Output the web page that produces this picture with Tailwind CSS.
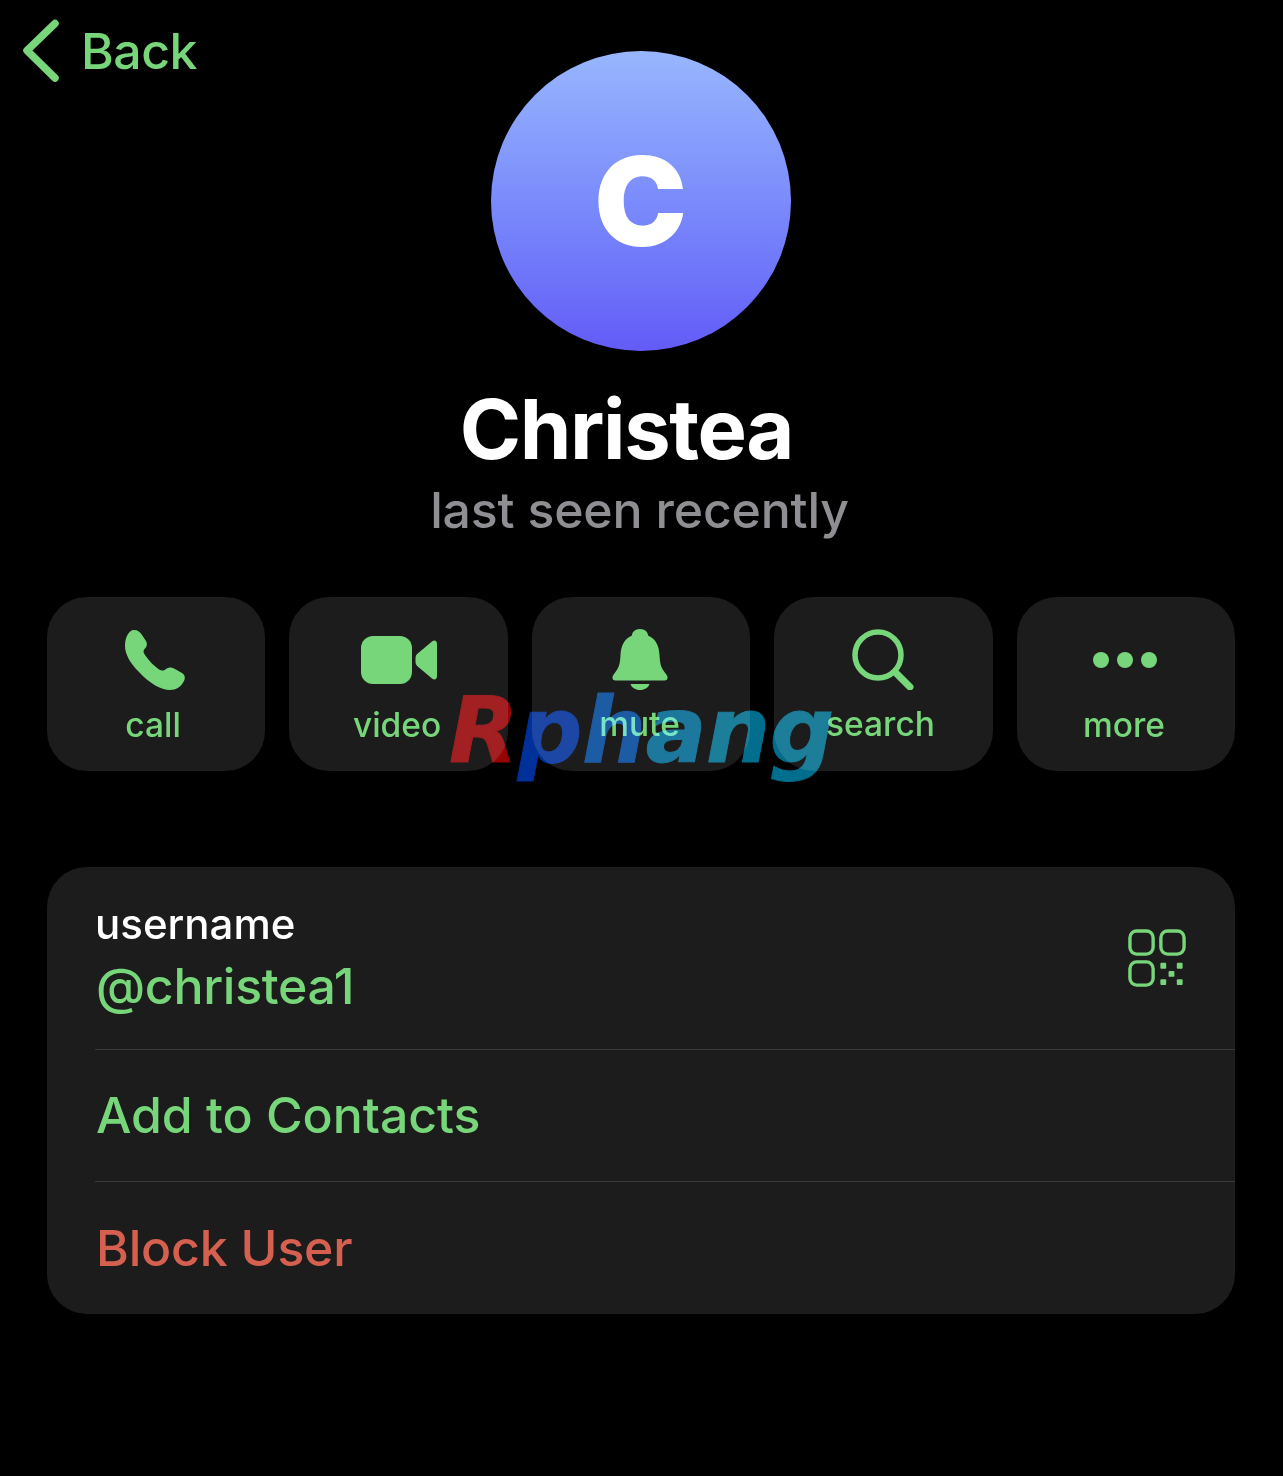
<!DOCTYPE html>
<html lang="en">
<head>
<meta charset="utf-8">
<script src="https://cdn.jsdelivr.net/npm/@tailwindcss/browser@4"></script>
<title>Christea</title>
</head>
<body class="bg-black">
<div class="relative w-[1283px] h-[1476px] bg-black font-['Inter','Liberation_Sans',sans-serif] overflow-hidden">
  <div class="absolute left-[22px] top-[19px] flex items-center gap-[21px] text-[#78d67a]">
    <svg width="38" height="64" viewBox="0 0 38 64" fill="none" stroke="#78d67a" stroke-width="7.5" stroke-linecap="round" stroke-linejoin="round"><path d="M33 4.5 5 31.5 33 59"/></svg>
    <span class="text-[50px] leading-[64px] font-medium tracking-[-0.5px]">Back</span>
  </div>

  <div class="flex flex-col items-center pt-[51px]">
    <div class="w-[300px] h-[300px] -translate-x-[1px] rounded-full bg-linear-to-b from-[#98b6fd] to-[#635bf7] flex items-center justify-center">
      <span class="text-white font-black text-[124px] leading-none">C</span>
    </div>
    <div class="mt-[30px] h-[96px] flex items-center text-white font-bold text-[83px] tracking-[-1.4px] leading-none -translate-x-[15px]">Christea</div>
    <div class="mt-[3px] h-[60px] flex items-center text-[#8e8e93] font-medium text-[50px] leading-none tracking-[-0.2px] -translate-x-[2px]">last seen recently</div>
  </div>

  <div class="mt-[57px] ml-[47px] w-[1188px] grid grid-cols-5 gap-[24.25px]">
    <div class="h-[174px] rounded-[40px] bg-[#1c1c1d] flex flex-col items-center pt-[33px]">
      <div class="h-[60px] flex items-center justify-center -translate-x-[1px]">
        <svg width="60" height="60" viewBox="0 0 60 60" fill="#78d67a"><path d="M9 0C13 0 15 2 17 5L21 11C22.5 14 22 16 20 18.5C18 21 18 22 20 25C24 31 29 36 34 39.5C37 41 38.5 41 41 39C44 37 46 37 49 38.5L57 43C60 45 60.5 48 59 51C56 57 51 60 45 60C36 60 24 53 14 42C5 33 0 24 0 16C0 7 4 0 9 0Z"/></svg>
      </div>
      <span class="mt-[15px] -translate-x-[3px] text-[#78d67a] font-medium text-[33.5px] leading-[40px]">call</span>
    </div>
    <div class="h-[174px] rounded-[40px] bg-[#1c1c1d] flex flex-col items-center pt-[33px]">
      <div class="h-[60px] flex items-center justify-center">
        <svg width="76" height="48" viewBox="0 0 76 48" fill="#78d67a"><rect width="51" height="48" rx="12"/><path d="M54.5 22.5C54.5 20 55.5 18.5 57 17.3L71 5.5C73.5 3.5 76 4.8 76 8V40C76 43.2 73.5 44.5 71 42.5L57 30.7C55.5 29.5 54.5 28 54.5 25.5Z"/></svg>
      </div>
      <span class="mt-[15px] -translate-x-[1.5px] text-[#78d67a] font-medium text-[33.5px] leading-[40px]">video</span>
    </div>
    <div class="h-[174px] rounded-[40px] bg-[#1c1c1d] flex flex-col items-center pt-[32px]">
      <div class="h-[61px] flex items-center justify-center -translate-x-[1px]">
        <svg width="56" height="61" viewBox="0 0 56 61" fill="#78d67a"><path d="M28 0C33 0 36 3 36 6.5C44 10 47 17 47.5 26C48 35 49 39 54 45C56.5 48 56 51.5 52.5 51.5H3.5C0 51.5 -.5 48 2 45C7 39 8 35 8.5 26C9 17 12 10 20 6.5C20 3 23 0 28 0Z"/><path d="M18.5 55H37.5C36.5 58.5 32.5 61 28 61C23.5 61 19.5 58.5 18.5 55Z"/></svg>
      </div>
      <span class="mt-[14px] -translate-x-[1.5px] text-[#78d67a] font-medium text-[33.5px] leading-[40px]">mute</span>
    </div>
    <div class="h-[174px] rounded-[40px] bg-[#1c1c1d] flex flex-col items-center pt-[32px]">
      <div class="h-[61px] flex items-center justify-center">
        <svg width="62" height="61" viewBox="0 0 62 61" fill="none" stroke="#78d67a" stroke-linecap="round"><circle cx="26" cy="26" r="23" stroke-width="5.5"/><path d="M43 43 58 58" stroke-width="7"/></svg>
      </div>
      <span class="mt-[14px] -translate-x-[3px] text-[#78d67a] font-medium text-[33.5px] leading-[40px]">search</span>
    </div>
    <div class="h-[174px] rounded-[40px] bg-[#1c1c1d] flex flex-col items-center pt-[33px]">
      <div class="h-[60px] flex items-center justify-center -translate-x-[1px]">
        <svg width="64" height="16" viewBox="0 0 64 16" fill="#78d67a"><circle cx="8" cy="8" r="8"/><circle cx="32" cy="8" r="8"/><circle cx="56" cy="8" r="8"/></svg>
      </div>
      <span class="mt-[15px] -translate-x-[2px] text-[#78d67a] font-medium text-[33.5px] leading-[40px]">more</span>
    </div>
  </div>

  <div class="mt-[96px] ml-[47px] w-[1188px] h-[447px] rounded-[40px] bg-[#1c1c1d] flex flex-col">
    <div class="h-[182px] pl-[48px] pr-[48px] flex items-center justify-between">
      <div class="flex flex-col mt-[5px]">
        <span class="text-white font-medium text-[42px] leading-[50px]">username</span>
        <span class="text-[#78d67a] font-medium text-[50px] leading-[74px] tracking-[-0.3px] translate-x-[1px]">@christea1</span>
      </div>
      <svg width="58" height="58" viewBox="0 0 60 60" fill="none" stroke="#78d67a" stroke-width="3.5" class="mt-[-1px] mr-[1px]"><rect x="2" y="2" width="24" height="24" rx="7"/><rect x="34" y="2" width="24" height="24" rx="7"/><rect x="2" y="34" width="24" height="24" rx="7"/><g fill="#78d67a" stroke="none"><rect x="33.5" y="35" width="6" height="6" rx="1"/><rect x="50.5" y="35" width="6" height="6" rx="1"/><rect x="42" y="43.5" width="6" height="6" rx="1"/><rect x="33.5" y="52" width="6" height="6" rx="1"/><rect x="50.5" y="52" width="6" height="6" rx="1"/></g></svg>
    </div>
    <div class="ml-[48px] h-px bg-[#3a3a3c]"></div>
    <div class="h-[131px] pl-[49px] flex items-center text-[#78d67a] font-medium text-[50px] tracking-[-0.05px]">Add to Contacts</div>
    <div class="ml-[48px] h-px bg-[#3a3a3c]"></div>
    <div class="h-[132px] pl-[49px] flex items-center text-[#d6604f] font-medium text-[50px] tracking-[-0.2px]">Block User</div>
  </div>

  <div class="absolute left-[449px] top-[679px] mix-blend-screen font-['DejaVu_Sans',sans-serif] font-bold italic text-[90px] leading-[104px] tracking-[-0.4px] whitespace-nowrap [-webkit-text-stroke:1px_currentColor]"><span class="text-[#960404]">R</span><span class="text-[#00309a]">p</span><span class="text-[#004898]">h</span><span class="text-[#006890]">a</span><span class="text-[#006e8c]">ng</span></div>
</div>
</body>
</html>
